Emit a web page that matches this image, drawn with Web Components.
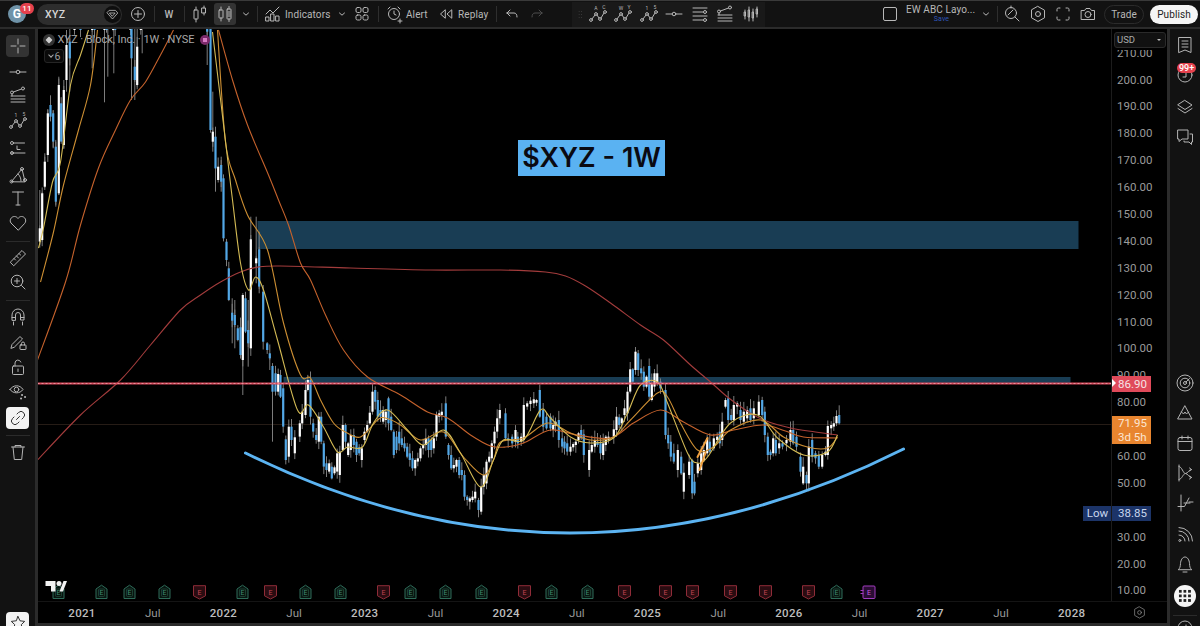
<!DOCTYPE html>
<html><head><meta charset="utf-8"><title>XYZ</title>
<style>
html,body{margin:0;padding:0;background:#2b2b2b;overflow:hidden;height:626px;font-family:Roboto,"Liberation Sans",sans-serif;color:#bdbdbd}
tv-app{width:1200px;height:626px}
</style></head><body>
<tv-app>
  <tv-topbar slot="top">
    <tv-avatar></tv-avatar>
    <tv-symbol style="margin-left:11px;width:85px">XYZ</tv-symbol>
    <tv-tool icon="plus" style="margin-left:5px;width:22px"></tv-tool>
    <tv-sep style="margin-left:5px"></tv-sep>
    <tv-tool style="margin-left:2px;width:24px"><b style="font-weight:500">W</b></tv-tool>
    <tv-sep style="margin-left:3px"></tv-sep>
    <tv-tool icon="barhollow" style="margin-left:3px;width:24px"></tv-tool>
    <tv-tool icon="candle" active style="margin-left:2px;width:22px"></tv-tool>
    <tv-tool icon="chev" style="margin-left:2px;width:16px"></tv-tool>
    <tv-sep style="margin-left:3px"></tv-sep>
    <tv-tool icon="indicators" style="margin-left:5px;width:65px">Indicators</tv-tool>
    <tv-tool icon="chev" style="margin-left:6px;width:16px"></tv-tool>
    <tv-tool icon="squares" style="margin-left:2px;width:20px"></tv-tool>
    <tv-sep style="margin-left:6px"></tv-sep>
    <tv-tool icon="alert" style="margin-left:5px;width:42px">Alert</tv-tool>
    <tv-tool icon="replay" style="margin-left:10px;width:50px">Replay</tv-tool>
    <tv-sep style="margin-left:10px"></tv-sep>
    <tv-tool icon="undo" style="margin-left:5px;width:20px"></tv-tool>
    <tv-tool icon="redo" dim style="margin-left:5px;width:20px"></tv-tool>
    <tv-drawbar style="margin-left:25px;width:193px"></tv-drawbar>
    <tv-tool icon="box" style="margin-left:115px;width:20px"></tv-tool>
    <tv-layout style="margin-left:6px;width:70px">EW ABC Layo...</tv-layout>
    <tv-tool icon="chev" style="margin-left:2px;width:16px"></tv-tool>
    <tv-sep style="margin-left:3px"></tv-sep>
    <tv-tool icon="search" style="margin-left:4px;width:20px"></tv-tool>
    <tv-tool icon="hex" style="margin-left:6px;width:20px"></tv-tool>
    <tv-tool icon="full" style="margin-left:5px;width:20px"></tv-tool>
    <tv-tool icon="camera" style="margin-left:5px;width:20px"></tv-tool>
    <tv-pill style="margin-left:6px;width:40px">Trade</tv-pill>
    <tv-pill primary style="margin-left:6px;width:48px">Publish</tv-pill>
  </tv-topbar>
  <tv-lefttools slot="left"></tv-lefttools>
  <tv-chart slot="chart"></tv-chart>
  <tv-righttools slot="right"></tv-righttools>
</tv-app>
<script>
const S=(b,extra='')=>`<svg viewBox="0 0 20 20" width="20" height="20" fill="none" stroke="currentColor" stroke-width="1" stroke-linecap="round" stroke-linejoin="round" ${extra}>${b}</svg>`;
const c=(x,y,r)=>`<circle cx="${x}" cy="${y}" r="${r}"/>`;
const lbl=(x,y,t)=>`<text x="${x}" y="${y}" font-size="5" fill="currentColor" stroke="none" text-anchor="middle" font-family="Roboto,sans-serif">${t}</text>`;
const wave=(a,b)=>`${c(3,16,1.4)}${c(8,10,1.4)}${c(12,15,1.4)}${c(17,8,1.4)}<path d="M4 15 7 11M9 11l2 3M13 14l3-5"/>${lbl(8,6,a)}${lbl(16,5,b)}`;
const ICONS={
 plus:`${c(10,10,6.5)}<path d="M10 6.5v7M6.5 10h7"/>`,
 barhollow:`<rect x="4" y="6" width="4" height="9" rx=".5"/><path d="M6 3v3M6 15v3"/><rect x="12" y="4" width="3.5" height="5"/><path d="M14 2v2M14 9v2"/>`,
 candle:`<rect x="4" y="6" width="4" height="8" rx=".5"/><path d="M6 3v3M6 14v3"/><rect x="12" y="5" width="4" height="10" rx=".5"/><path d="M14 2.5V5M14 15v2.5"/><path d="M13 8h2M13 10h2M13 12h2"/>`,
 chev:`<path d="M7.5 9 10 11.2 12.500 9"/>`,
 indicators:`<path d="M3 10 7 6l3 3 6-6"/><rect x="3" y="13" width="3" height="4"/><rect x="8" y="10" width="3" height="7"/><rect x="13" y="12" width="3" height="5"/>`,
 squares:`<rect x="4" y="3.500" width="5" height="5" rx="1.500"/><rect x="11" y="3.500" width="5" height="5" rx="1.500"/><rect x="4" y="11" width="5" height="5" rx="1.500"/><rect x="11" y="11" width="5" height="5" rx="1.500"/>`,
 alert:`${c(10,10,5.500)}<path d="M10 7v3l2 1M4 5l2-2M16 5l-2-2M14 17h4M16 15v4"/>`,
 replay:`<path d="M9 6 4.500 10 9 14zM15.500 6 11 10l4.500 4z"/>`,
 undo:`<path d="M5 9h7c2 0 3 1.500 3 4M5 9l3-3M5 9l3 3"/>`,
 redo:`<path d="M15 9H8c-2 0-3 1.500-3 4M15 9l-3-3M15 9l-3 3"/>`,
 box:`<rect x="3.500" y="3.500" width="13" height="13" rx="1.500"/>`,
 search:`${c(9,9,5.500)}<path d="M13 13l4 4M6 11l5-5M9 4V2"/>`,
 hex:`<path d="M10 2.500 16.500 6.200v7.600L10 17.500 3.500 13.800V6.200z"/>${c(10,10,2.500)}`,
 full:`<path d="M4 7V5.500C4 4.500 4.500 4 5.500 4H7M13 4h1.500c1 0 1.500.5 1.500 1.500V7M16 13v1.500c0 1-.5 1.500-1.500 1.500H13M7 16H5.500C4.500 16 4 15.500 4 14.500V13"/>`,
 camera:`<path d="M3.500 6.500h3L8 4.500h4l1.500 2h3v9h-13z"/>${c(10,10.500,3)}`,
 lineh:`<path d="M2 10h6M12 10h6"/>${c(10,10,1.800)}`,
 lines:`<path d="M3 4h14M3 8h10M3 12h14"/>${c(15,8,1.500)}<path d="M3 16h10"/>${c(15,16,1.500)}`,
 fibline:`${c(4,7.500,1.500)}${c(15,3.500,1.500)}<path d="M5.500 7 13.500 4M3 11h14M3 14h14M3 17h14M4 9v2"/>`,
 wave15:wave('1','5'),waveAC:wave('A','C'),waveWY:wave('W','Y'),
 candles:`<path d="M4 6v9M8 3v14M12 5v12M16 3v10"/><path d="M3.500 8h1v4h-1zM7.500 6h1v7h-1zM11.500 8h1v6h-1zM15.500 5h1v5h-1z"/>`,
 fibL:`${c(4,5,1.500)}<path d="M5.500 5h11M3 15h14"/>${c(4,15,1.500)}<path d="M9 8v3.500h3"/>`,
 tri:`<path d="M3.500 16.500 14 4l3 12.500z"/>${c(14,4,1.500)}${c(3.500,16.500,1.500)}${c(17,15,1.500)}<path d="M10 9c2 2 3 4 3 7"/>`,
 text:`<path d="M4.500 4h11M10 4v13M8 17h4"/>`,
 heart:`<path d="M10 17 3 10C1 7.500 3 3.500 6.500 3.500c1.500 0 2.700.8 3.500 2 .8-1.200 2-2 3.500-2C17 3.500 19 7.500 17 10z"/>`,
 ruler:`<path d="M2.500 14 14 2.500l3.500 3.500L6 17.500z"/><path d="M6 10.500l1.500 1.500M8.500 8l2 2M11 5.500l1.500 1.500"/>`,
 zoom:`${c(9,9,5.800)}<path d="M13.500 13.500 17 17M9 6.500v5M6.500 9h5"/>`,
 magnet:`<path d="M4 13V8a6 6 0 0 1 12 0v5h-3.500V8a2.500 2.500 0 0 0-5 0v5z"/><path d="M4 10.500h3.500M12.500 10.500H16M5.500 15v3M14.500 15v3"/>`,
 pencillock:`<path d="M3 16l1-3.500L12 4.500l2.500 2.500-8 8z"/><rect x="12" y="13" width="6" height="4.500" rx=".5"/><path d="M13.500 13v-1.500a1.500 1.500 0 0 1 3 0V13"/>`,
 lock:`<rect x="4.500" y="9" width="11" height="8.500" rx="1"/><path d="M7 9V6a3 3 0 0 1 5.800-1M10 12v2.500"/>`,
 eye:`<path d="M2 8.500C5 3.500 12 3.500 15 8.500 12 13 5 13 2 8.500z"/>${c(8.500,8.500,2.300)}<path d="M14 14h.1M17 16h.1M13 17.500h.1" stroke-width="2"/>`,
 link:`<path d="M8.500 11.500 11.500 8.500M9 6l1.500-1.500a3.300 3.300 0 0 1 5 5L14 11M6 9 4.500 10.500a3.300 3.300 0 0 0 5 5L11 14"/>`,
 trash:`<path d="M3.500 5h13M7 5V3.500h6V5M5 5l1.300 12.500h7.400L15 5"/>`,
 star:`<path d="M10 3.500l2 4.300 4.700.6-3.400 3.200.9 4.600L10 13.900l-4.200 2.300.9-4.600L3.300 8.400 8 7.800z"/>`,
 cross:`<path d="M10 3v5M10 12v5M3 10h5M12 10h5"/>`,
 list:`<path d="M4 2.500h12v15l-6-2.500-6 2.500z"/><path d="M7 6h6M7 9h6M7 12h6"/>`,
 clock:`${c(10,10,7)}<path d="M11 7v5H8"/>`,
 layers:`<path d="M10 3.500 17 8l-7 4.500L3 8z"/><path d="M3 11.500 10 16l7-4.500"/>`,
 chat:`<path d="M3 3h10v9H7l-3 2.500V12H3z"/><path d="M15 7h2.500v8H16.500v2.500L14 15H9v-1"/>`,
 radar:`${c(10,10,8)}${c(10,10,4.800)}${c(10,10,1.500)}<path d="M11 9l3.500-3.500"/>`,
 mountain:`<path d="M10 3 17 16H3z"/><path d="M6.500 9l2 2 1.500-2 1.500 2 2-2"/>`,
 calendar:`<rect x="3" y="4.500" width="14" height="13" rx="2"/><path d="M3 8.500h14M7 3v3M13 3v3"/>`,
 branch:`<path d="M4 2v16M4 3.500c3 0 4 7 6.500 7s3-4 6-4M4 16.500c3 0 4-6 6.500-6s3 4 6 4"/><path d="M14.500 5l2 1.500-2 1.500M14.500 13l2 1.500-2 1.500"/>`,
 fork:`<path d="M6 2v16M3 13.500h3M6 13.500h3.500L14 5M14 9h4M9 10h6"/>`,
 signal:`<path d="M4 10a6 6 0 0 1 6 6M4 6a10 10 0 0 1 10 10M4 2.500A13.500 13.500 0 0 1 17.500 16"/>${c(4.800,15.500,1)}`,
 bell:`<path d="M3.500 15.500c1.500-1 1.800-3 2-6C5.700 6 7.500 3 10 3s4.300 3 4.500 6.500c.2 3 .5 5 2 6zM8 18h4"/>`
};
const sr=(el,html)=>{el.attachShadow({mode:'open'}).innerHTML=html;return el.shadowRoot};

class TvApp extends HTMLElement{constructor(){super();sr(this,`<style>
:host{display:grid;grid-template-columns:35px 1fr 30px;grid-template-rows:27px 1fr;row-gap:2px;background:#2b2b2b}
.top{grid-column:1/4}.left{overflow:hidden;min-height:0}.chart{margin:0 3px 3px 2.500px;min-width:0;min-height:0}.right{min-height:0;overflow:hidden}
</style>
<div class="top"><slot name="top"></slot></div>
<div class="left"><slot name="left"></slot></div>
<div class="chart"><slot name="chart"></slot></div>
<div class="right"><slot name="right"></slot></div>`)}}
class TvTopbar extends HTMLElement{constructor(){super();sr(this,`<style>:host{display:flex;align-items:center;height:27px;box-sizing:border-box;border-top:1px solid #3a3a3a;background:#121212;padding-left:8px;font-size:10px;letter-spacing:.1px;color:#bdbdbd;white-space:nowrap}</style><slot></slot>`)}}
class TvAvatar extends HTMLElement{constructor(){super();sr(this,`<style>:host{display:block;position:relative;width:18px;height:18px;border-radius:50%;background:#6f93a8;color:#fff;font-size:12px;font-weight:700;text-align:center;line-height:18px;flex:none}
i{position:absolute;left:12px;top:-2px;width:14px;height:11px;border-radius:6px;background:#e5414d;color:#fff;font:500 8px/11px Roboto,sans-serif}</style>G<i>11</i>`)}}
class TvSymbol extends HTMLElement{constructor(){super();sr(this,`<style>:host{display:flex;align-items:center;justify-content:space-between;height:21px;border-radius:11px;background:#2d2d2d;padding:0 1.500px 0 8px;box-sizing:border-box;color:#d8d8d8;font-weight:500;font-size:10.500px;letter-spacing:.3px;flex:none}
span{width:17px;height:17px;border-radius:50%;background:#0e0e0e;display:flex;align-items:center;justify-content:center;color:#ccc}
svg{width:15px;height:15px}</style><div><slot></slot></div><span>${S(`<path d="M6 4.500h8l3 3.500-7 8-7-8zM6.500 8h7L10 12z"/>`)}</span>`)}}
class TvTool extends HTMLElement{constructor(){super();const n=this.getAttribute('icon');const act=this.hasAttribute('active'),dim=this.hasAttribute('dim');sr(this,`<style>:host{display:flex;align-items:center;height:22px;justify-content:${this.textContent.trim()&&n?'flex-start':'center'};gap:2px;flex:none;color:${dim?'#4c4c4c':'#b8b8b8'};border-radius:3px;${act?'background:#333;':''}}
svg{flex:none}</style>${n?S(ICONS[n]):''}<slot></slot>`)}}
class TvSep extends HTMLElement{constructor(){super();sr(this,`<style>:host{display:block;width:1px;height:16px;background:#2e2e2e;flex:none}</style>`)}}
class TvDrawbar extends HTMLElement{constructor(){super();const ns=['waveAC','waveWY','wave15','lineh','lines','fibline','candles'];
sr(this,`<style>:host{display:flex;align-items:center;height:25px;background:#191919;padding-left:13px;box-sizing:border-box;flex:none;color:#b8b8b8;position:relative}
div{width:25.500px;display:flex;justify-content:center;flex:none}
i{position:absolute;left:6px;top:8px;width:4px;height:9px;background-image:radial-gradient(#444 40%,transparent 45%);background-size:2.200px 3px}</style><i></i>${ns.map(n=>`<div>${S(ICONS[n])}</div>`).join('')}`)}}
class TvLayout extends HTMLElement{constructor(){super();sr(this,`<style>:host{display:flex;flex-direction:column;height:22px;justify-content:center;align-items:flex-start;flex:none;line-height:10px;color:#b8b8b8;font-size:10px}
small{font-size:7px;line-height:8px;color:#2f55b8;align-self:center;margin-right:-1px}</style><div><slot></slot></div><small>Save</small>`)}}
class TvPill extends HTMLElement{constructor(){super();const p=this.hasAttribute('primary');sr(this,`<style>:host{display:flex;align-items:center;justify-content:center;height:19px;border-radius:10px;box-sizing:border-box;flex:none;${p?'background:#f5f5f5;color:#222;':'border:1px solid #2b2b2b;color:#b8b8b8;'}font-size:10px}</style><slot></slot>`)}}
class TvColTools extends HTMLElement{
 build(items,pt){sr(this,`<style>:host{display:flex;flex-direction:column;align-items:center;height:597px;background:#121212;color:#b4b4b4;padding-top:${pt}px;box-sizing:border-box;overflow:hidden;position:relative}
.i{display:flex;align-items:center;justify-content:center;flex:none;width:23px}
.act{border-radius:4px;background:#333}.white{border-radius:4px;background:#f3f3f3;color:#333}
.d{width:24px;height:1px;background:#2b2b2b;flex:none}
.round{border-radius:50%;background:#f5f5f5;color:#222;width:22px;height:22px}
.rel{position:relative}
.badge{position:absolute;top:-2px;left:3.500px;background:#e5414d;color:#fff;font:500 9px/10px Roboto,sans-serif;padding:0 2px;border-radius:5px}
.dots{width:14px;height:14px;background-image:radial-gradient(#222 50%,transparent 55%);background-size:4.600px 4.600px}
</style>`+items.map(it=>{
  if(it.d!==undefined)return `<div class="d" style="margin:${it.d}px 0 ${it.e}px"></div>`;
  return `<div class="i ${it.k||''}" style="height:${it.h||20}px;margin-top:${it.m||0}px">${it.n?S(ICONS[it.n]):''}${it.b?`<span class="badge">${it.b}</span>`:''}${it.dots?'<span class="dots"></span>':''}</div>`}).join(''))}
}
class TvLeftTools extends TvColTools{constructor(){super();this.build([
{n:'cross',h:22,k:'act'},{n:'lineh',m:5},{n:'fibline',m:3},{n:'wave15',m:6},{n:'fibL',m:7},{n:'tri',m:7},{n:'text',m:3},{n:'heart',m:5},
{d:8,e:6},{n:'ruler'},{n:'zoom',m:4},{d:8,e:6},{n:'magnet'},{n:'pencillock',m:5},{n:'lock',m:5},{n:'eye',m:4},
{n:'link',h:22,k:'white',m:6},{d:6,e:6},{n:'trash'},{h:22,n:'star',k:'white',m:150}],6)}}
class TvRightTools extends TvColTools{constructor(){super();this.build([
{n:'list'},{n:'clock',m:10,k:'rel',b:'99+'},{n:'layers',m:12},{n:'chat',m:10},
{n:'radar',m:226},{n:'mountain',m:10},{n:'calendar',m:10},{n:'branch',m:10},{n:'fork',m:10},{n:'signal',m:12},{n:'bell',m:9},
{k:'round',h:22,dots:1,m:11},{d:8,e:2},{n:'clock'}],6)}}

const PRICE_LABELS=[];for(let p=210;p>=10;p-=10)PRICE_LABELS.push(p==70||p==40?'':p.toFixed(2));
const TIME=[['2021',1],['Jul'],['2022',1],['Jul'],['2023',1],['Jul'],['2024',1],['Jul'],['2025',1],['Jul'],['2026',1],['Jul'],['2027',1],['Jul'],['2028',1]];
class TvPriceScale extends HTMLElement{constructor(){super();sr(this,`<style>:host{display:block;position:relative;overflow:hidden;background:#000;border-left:1px solid #1c1c1c;box-sizing:border-box;padding-top:10.650px;color:#9b9b9b;font-size:11.500px}
.l{height:26.900px;line-height:26.900px;padding-left:5px}
.usd{position:absolute;left:2px;top:3px;width:52px;height:16px;box-sizing:border-box;border:1px solid #2a2a2a;border-radius:3px;background:#111;color:#aaa;font-size:9.500px;line-height:14px;padding-left:2px;box-shadow:0 2px 0 #000}
.usd:after{content:"";position:absolute;right:4px;top:6px;border:2.500px solid transparent;border-top-color:#bbb}
.b{position:absolute;left:-1px;width:40px;box-sizing:border-box;padding-left:7px;white-space:nowrap}
.red{top:347px;height:16px;line-height:16px;background:#e04a5a;color:#f6e3e5}
.org{top:387px;height:28px;line-height:14px;background:#e8852f;color:#fbe6d2}
.low{top:477px;height:15px;line-height:15px;background:#1c3468;color:#c9d6ee}
.tri{position:absolute;left:0;top:350px;border:4px solid transparent;border-left:4px solid #fff;border-right:0}</style>
${PRICE_LABELS.map(l=>`<div class="l">${l}</div>`).join('')}
<div class="usd">USD</div><div class="b red">86.90</div><div class="tri"></div><div class="b org">71.95<br>3d 5h</div><div class="b low">38.85</div>`)}}
class TvTimeScale extends HTMLElement{constructor(){super();sr(this,`<style>:host{display:flex;background:#000;border-top:1px solid #141414;box-sizing:border-box;padding-left:9.200px;align-items:center;color:#999;font-size:11.500px;position:relative}
div{width:70.700px;text-align:center;flex:none}b{color:#bdbdbd;font-weight:500;letter-spacing:.3px}
svg{position:absolute;left:1094px;top:3px;width:15px;height:15px;color:#8a8a8a}</style>${TIME.map(t=>`<div>${t[1]?`<b>${t[0]}</b>`:t[0]}</div>`).join('')}${S(ICONS.hex)}`)}}

const SEG=[
[30,25,"w28,610,650 w35,505,645 w43,410,485 w52,265,390 b60,240,275 b68,265,350 b76,365,530 w85,180,505 b92,235,350 w100,195,360 w108,60,165 b118,50,100 w132,0,15 b150,0,15 w185,0,15 b192,0,15 w222,0,15 b228,0,15 w248,0,15 b254,0,15 w300,0,15 b303,0,100 b313,125,165 w320,65,180 w331,0,15 b530,0,20 b540,0,315 w547,320,350 b555,335,430 w563,425,465 b572,420,470 b579,460,640"],
[200,200,"b78,125,180 b85,205,300 b95,338,362 b103,345,375 b112,385,420 b120,382,465 w127,285,480 b135,295,395 b143,390,430 w151,118,445 w167,175,190 b176,148,260 b188,275,425 b200,430,450 b208,460,475 b216,498,575 b225,520,575 w233,522,575 b240,525,590 b248,565,680"],
[230,360,"b166,238,300 w175,200,290 b183,200,240 w193,232,280 w208,190,230 w215,155,190 w225,90,165 w232,60,90 b240,60,170 b248,190,215 b257,225,240 w265,170,245 b272,170,245 b280,250,320 b288,310,330 w296,310,335 b304,320,355 w312,322,340 w320,280,335 w328,275,345 w337,195,270 b345,195,245 w353,250,285 w361,225,270 b370,225,255 b378,245,285 b386,262,280 w394,265,300 w402,215,240 w410,195,215 w418,158,190 w426,95,155 b434,90,125 b442,120,170 b450,150,170 w458,150,185 w466,155,180 b474,115,190 b482,170,210 b490,215,285 b498,230,270 b506,215,250 b514,235,255 b522,250,265 b530,260,290 b538,280,300 b546,295,325 w554,300,325 w562,295,305 w570,265,295 w578,255,265 w586,235,255 b594,235,270 b602,240,270 w610,235,265 w618,165,230 w626,160,170 w634,155,165 b646,130,230 b654,255,285 b662,285,325 w670,315,325 w678,300,320 b686,300,345 b694,330,345 b702,345,410 b710,410,420 w718,415,425 w726,410,420 w734,395,415 b744,420,450 w752,380,455 w760,345,380 w768,305,370 w776,290,305 w784,250,295 w792,215,250 w800,175,215 w808,150,175 b825,160,235 b833,235,242 b845,230,250 w855,210,245 b862,230,250 w872,230,245 w880,135,240 w890,130,140 w900,122,132 w910,118,130 w918,120,128 b928,90,170 b938,150,200 b948,170,205"],
[550,340,"b0,230,265 w8,255,270 w15,245,258 b25,240,300 b35,295,320 b42,305,325 b50,310,335 w60,320,335 w68,312,322 w76,305,315 w84,280,300 b92,270,295 b100,283,345 w116,330,390 w124,315,335 w133,300,320 b141,305,315 b150,310,340 w158,310,345 w166,290,315 w174,290,300 w190,268,290 w198,230,270 b206,232,255 w214,235,250 w222,205,225 w231,155,220 w239,88,155 b247,88,125 w255,35,90 b263,40,90 b272,85,100 b280,95,140 w288,110,140 b296,78,170 w304,130,180 w312,100,140 w320,100,130 b330,125,145 b345,150,285 b353,285,310 b361,305,350 b370,340,365 w382,330,390 b392,350,400 w400,398,455 w416,365,405 b425,360,460 b432,425,460 w442,370,400 w452,340,390 w460,330,360 w470,295,340 b478,305,335 w490,295,325 w500,290,300 b508,275,310 w515,245,300 w525,180,200 b533,175,240 b542,225,240 w550,195,240 w560,190,200 b570,210,240 w580,215,245 w590,210,235 b600,205,240 w610,205,235 w625,185,225 b635,180,225 b643,215,285 b652,290,345 b660,335,345 w668,295,340 b676,300,340 w686,310,325 b696,310,320 w708,300,310 w720,270,305 b728,270,310 b738,290,320 b750,350,395 w758,380,430 b768,405,430 w775,320,430 b785,300,350 b795,340,355 b805,345,380 w815,345,380 w825,335,345 w832,258,345 w842,255,265 w850,250,260 w858,228,250 b866,225,250"]];
const WICKS=[[30,25,"28,495,660 35,500,650 43,395,495 52,255,390 60,215,280 68,255,370 76,350,545 85,155,510 100,165,370 108,15,200 118,0,200 185,0,130 222,0,232 232,0,155 250,0,145 303,0,225 313,0,225 320,0,185 335,0,85 530,0,120 547,200,380 555,320,500 572,395,500"],[200,200,"95,295,430 103,300,445 120,365,470 127,285,585 143,300,500 151,50,445 167,50,250 176,95,280 208,470,510 216,495,725"]];
const E=[['g',58],['g',101],['g',129],['g',164],['r',199],['g',242],['r',270],['g',305],['g',340],['r',383],['g',410],['g',445],['g',481],['r',524],['g',551],['g',587],['r',624],['r',665],['r',692],['r',730],['r',765],['r',808],['g',836],['p',868]];
const ema={
 red:"37,460 80,415 120,380 150,345 180,310 200,295 220,282 240,272 258,267 280,266 350,268 430,270 500,270 545,272 565,276 585,286 610,303 640,325 663,340 690,365 710,382 727,397 745,410 763,420 790,428 815,432 837,435",
 brown:"37,360 65,282 80,225 98,168 115,130 130,100 145,82 160,55 173,30 M218,30 232,80 247,125 268,175 278,200 288,225 300,263 310,280 325,315 343,350 367,377 400,395 427,412 447,418 470,435 490,446 505,447 523,443 550,430 577,435 610,438 633,423 660,410 683,422 710,435 733,430 763,425 785,431 803,437 837,438",
 orange:"40,282 53,232 63,185 78,130 90,85 97,30 M217,30 225,142 235,180 247,215 267,250 283,323 300,375 310,378 320,400 333,423 345,432 360,437 377,420 385,418 400,425 420,440 443,432 463,457 483,475 493,460 500,442 523,438 547,423 570,433 590,440 613,437 630,420 657,393 667,397 680,423 697,450 713,447 730,430 760,420 783,437 807,447 827,448 837,437",
 yellow:"38,248 43,228 52,182 60,162 70,85 80,55 88,30 M212,32 227,158 232,200 240,263 248,290 255,277 263,290 277,340 297,410 308,405 323,427 337,452 347,447 362,447 373,423 387,410 407,430 423,445 443,430 460,453 480,487 493,460 503,440 523,440 540,410 550,418 570,437 590,443 613,438 627,413 640,385 657,382 667,403 687,453 697,463 707,457 730,423 757,415 777,438 803,455 827,452 837,435"};
function emaPath(s){return s.split(' M').map(seg=>{const p=seg.trim().split(' ').map(q=>q.split(',').map(Number));let d=`M${p[0][0]} ${p[0][1]}`;
 for(let i=0;i<p.length-1;i++){const a=p[Math.max(0,i-1)],b=p[i],e=p[i+1],f=p[Math.min(p.length-1,i+2)];
  d+=`C${(b[0]+(e[0]-a[0])/6).toFixed(1)} ${(b[1]+(e[1]-a[1])/6).toFixed(1)} ${(e[0]-(f[0]-b[0])/6).toFixed(1)} ${(e[1]-(f[1]-b[1])/6).toFixed(1)} ${e[0]} ${e[1]}`}
 return d}).join('')}
class TvCandles extends HTMLElement{constructor(){super();
 let wicks='',bodies='',n=0;const rnd=()=>{n=(n*9301+49297)%233280;return n/233280};
 SEG.forEach(([ox,oy,d])=>{d.trim().split(' ').forEach(t=>{const[a,b,e]=t.slice(1).split(',').map(Number);const x=ox+a/3,y1=oy+b/3,y2=oy+e/3;
  const col=t[0]=='w'?'#fff':'#52a7e6';bodies+=`<rect x="${(x-1.1).toFixed(1)}" y="${y1.toFixed(1)}" width="2.2" height="${Math.max(1.5,y2-y1).toFixed(1)}" fill="${col}"/>`;
  wicks+=`<path d="M${x.toFixed(1)} ${(y1-1-rnd()*9).toFixed(1)}V${(y2+1+rnd()*7).toFixed(1)}"/>`})});
 WICKS.forEach(([ox,oy,d])=>d.trim().split(' ').forEach(t=>{const[a,b,e]=t.split(',').map(Number);wicks+=`<path d="M${(ox+a/3).toFixed(1)} ${(oy+b/3).toFixed(1)}V${(oy+e/3).toFixed(1)}"/>`}));
 const marks=E.map(([k,x])=>{const txt=`<text x="0" y="2.600" font-size="7" text-anchor="middle" font-family="Roboto,sans-serif"`;
  if(k=='g')return `<g transform="translate(${x} 592)"><path d="M-5.500 -3 0 -6.800 5.500 -3V6.500H-5.500z" fill="#081410" stroke="#2e6b58"/><rect x="-3" y="-3" width="6" height="7.500" rx="1" fill="none" stroke="#24513f" stroke-width=".7"/>${txt} fill="#3e8d72">E</text></g>`;
  if(k=='r')return `<g transform="translate(${x} 592)"><path d="M-6 -6.300H6V3.800L0 7-6 3.800z" fill="#2a0c11" stroke="#8f2c38"/>${txt} fill="#c14553">E</text></g>`;
  return `<g transform="translate(${x} 592)"><rect x="-5.500" y="-6" width="12" height="12.500" rx="1" fill="#2a0d33" stroke="#a23cc0"/><path d="M-8 -1.500h3M-8 1.500h3" stroke="#a23cc0"/>${txt.replace('x="0"','x=".5"')} fill="#c45be0">E</text></g>`}).join('');
 sr(this,`<style>:host{display:block;position:relative;overflow:hidden;background:#000;min-width:0}
svg{display:block;position:absolute;left:0;top:0}
.leg{position:absolute;left:5px;top:4px;display:flex;align-items:center;font-size:11px;color:#a8a8a8;line-height:14px;white-space:nowrap;letter-spacing:-.03px}
.leg i{width:12px;height:12px;border-radius:50%;background:#333;margin-right:3px;position:relative}
.leg i:after{content:"";position:absolute;left:3px;top:3px;width:6px;height:6px;background:#ccc;transform:rotate(45deg) scale(.85);border-radius:1px}
.leg u{width:10px;height:10px;border-radius:50%;background:#7c2a6a;margin-left:6px;text-decoration:none;position:relative}
.leg u:after{content:"";position:absolute;left:3px;top:3px;width:4px;height:4px;background:#d77bc4}
.n{position:absolute;left:6px;top:20px;width:20px;height:14px;box-sizing:border-box;border:1px solid #252525;border-radius:3px;background:#0a0a0a;display:flex;align-items:center;justify-content:flex-end;padding-right:2px;font-size:10.500px;color:#9d9d9d}
.n:before{content:"";position:absolute;left:4px;top:3px;width:3px;height:3px;border:solid #aaa;border-width:0 1px 1px 0;transform:rotate(45deg)}
.title{position:absolute;left:480.500px;top:111px;width:147px;height:36px;background:#5ab2f2;color:#0a0a12;font:600 27px/36px Inter,Roboto,sans-serif;text-align:center;white-space:nowrap}
.low{position:absolute;left:1045.500px;top:477px;width:29px;height:15px;background:#1c3468;color:#c9d6ee;font-size:11.500px;line-height:15px;text-align:center}
</style>
<svg width="1073.500" height="572" viewBox="37.500 29 1073.500 572">
<rect x="37" y="424" width="1075" height="1" fill="#261c16"/>
<rect x="257" y="221" width="821" height="28" fill="#193d54"/>
<rect x="283" y="377" width="787" height="7" fill="#193d54"/>
<g stroke="#7d7d7d" stroke-width="1" fill="none">${wicks}</g>
${bodies}
<path d="${emaPath(ema.red)}" fill="none" stroke="#a33c3c" stroke-width="1.100"/>
<path d="${emaPath(ema.brown)}" fill="none" stroke="#c5622c" stroke-width="1.100"/>
<path d="${emaPath(ema.orange)}" fill="none" stroke="#cd8f33" stroke-width="1.100"/>
<path d="${emaPath(ema.yellow)}" fill="none" stroke="#d4bb55" stroke-width="1.100"/>
<path d="M697 457 707 438M699 470 705 453" stroke="#f0a040" stroke-width="2" stroke-linecap="round"/>
<path d="M37 383.500H1111" stroke="#d8485a" stroke-width="2"/>
<path d="M37 383.500H1111" stroke="#ea8f9a" stroke-width="1" stroke-dasharray="2 2"/>
<path d="M245 453Q573 615 903 449" fill="none" stroke="#5cb4f2" stroke-width="3" stroke-linecap="round"/>
${marks}
<path d="M45 581h10v10.500h-4.500v-5.500H45z" fill="#f2f2f2"/><circle cx="58.500" cy="583.500" r="2.500" fill="#f2f2f2"/><path d="M59 591.500 63 581h3.500l-4 10.500z" fill="#f2f2f2"/>
</svg>
<div class="leg"><i></i>XYZ · Block, Inc. · 1W · NYSE<u></u></div>
<div class="n">6</div>
<div class="title">$XYZ - 1W</div>
<div class="low">Low</div>`)}}
class TvChart extends HTMLElement{constructor(){super();sr(this,`<style>:host{display:grid;grid-template-columns:1073.500px 56px;grid-template-rows:572px 22px;background:#000;height:594px}</style>
<tv-candles style="grid-column:1;grid-row:1"></tv-candles><tv-price-scale style="grid-column:2;grid-row:1"></tv-price-scale><tv-time-scale style="grid-column:1/3;grid-row:2"></tv-time-scale>`)}}
[['tv-app',TvApp],['tv-topbar',TvTopbar],['tv-avatar',TvAvatar],['tv-symbol',TvSymbol],['tv-tool',TvTool],['tv-sep',TvSep],['tv-drawbar',TvDrawbar],['tv-layout',TvLayout],['tv-pill',TvPill],['tv-lefttools',TvLeftTools],['tv-righttools',TvRightTools],['tv-price-scale',TvPriceScale],['tv-time-scale',TvTimeScale],['tv-candles',TvCandles],['tv-chart',TvChart]].forEach(([n,k])=>customElements.define(n,k));
</script>
</body></html>
